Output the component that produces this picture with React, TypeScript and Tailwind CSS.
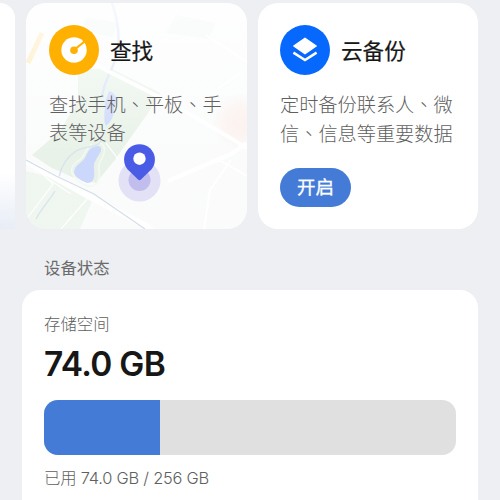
import React from 'react';

const storage = { used: 74, total: 256 };

// The enumeration comma sits in the middle of its box
const Comma = () => (
  <span className="font-['Noto_Sans_CJK_TC',sans-serif]">、</span>
);

function MapBackground() {
  return (
    <svg className="absolute inset-0 h-full w-full" viewBox="0 0 221 226" fill="none">
      <defs>
        <linearGradient id="fade" x1="0" y1="0" x2="0" y2="1">
          <stop offset="0" stopColor="#fff" stopOpacity="0.8" />
          <stop offset="0.3" stopColor="#fff" stopOpacity="0.5" />
          <stop offset="0.65" stopColor="#fff" stopOpacity="0.1" />
        </linearGradient>
        <radialGradient id="warm">
          <stop offset="0" stopColor="#fbefeb" />
          <stop offset="0.5" stopColor="#fbefeb" stopOpacity="0.8" />
          <stop offset="1" stopColor="#fbefeb" stopOpacity="0" />
        </radialGradient>
      </defs>
      <rect width="221" height="226" fill="#fafbfb" />
      <circle cx="214" cy="118" r="28" fill="url(#warm)" />
      {/* parks */}
      <path d="M52 66L86 66L134 90L122 110L88 158L70 180L46 174L26 165L6 152L34 128L52 98Z" fill="#e6f1e6" />
      <path d="M0 168L32 176L66 198L54 226H0Z" fill="#eef5ee" />
      <path d="M150 12L190 20L183 36L140 30Z" fill="#eff6f2" />
      <path d="M60 14L92 20L86 34L56 28Z" fill="#eff6f2" />
      <path d="M16 30L2 60" stroke="#fbe5a8" strokeWidth="5" />
      {/* water */}
      <path d="M86 0C93 20 94 35 91 50C88 66 78 76 76 94" stroke="#d3ddf3" strokeWidth="2.5" />
      <path d="M83 88C91 90 92 97 88 105C88 112 86 118 80 123C77 118 79 106 79 99Z" fill="#c6d4fb" />
      <path d="M68 144C72 142 76 143 75 148C71 156 67 159 68 166C69 174 68 180 61 180C55 178 48 173 48 169C49 161 57 160 60 153C62 148 64 145 68 144Z" fill="#c6d4fb" />
      <path d="M66 141C60 146 59 149 56 155C49 160 44 164 46 170C52 180 64 188 71 180C76 174 71 166 74 159C79 151 81 143 74 140" stroke="#f3f8f2" strokeWidth="1.5" />
      <path d="M76 135C74 146 60 142 50 148C41 154 35 164 33 174M29 188C23 198 15 206 10 216" stroke="#d3e0ec" strokeWidth="1.3" />
      {/* roads */}
      <g stroke="#fff">
        <path d="M66 60L147 101L221 145" strokeWidth="4" />
        <path d="M0 158L64 194L126 226" strokeWidth="6" />
        <path d="M142 178L205 151L221 140" strokeWidth="4.5" />
        <path d="M180 32L221 59M192 86L214 70M205 157L184 187L178 226M193 157L221 173" strokeWidth="2" />
        <path d="M8 163L27 181L2 214M21 175L45 191M35 226L61 196M80 140L92 156" strokeWidth="1.2" />
      </g>
      <path d="M0 157L30 173L68 191L119 226" stroke="#d0dbe4" strokeWidth="1.2" />
      <rect width="221" height="226" fill="url(#fade)" />
    </svg>
  );
}

function LocationPin() {
  return (
    <svg className="absolute left-[92px] top-[141px]" width="43" height="60" viewBox="0 0 43 60">
      <circle cx="21.5" cy="36.5" r="21" fill="#7066e0" fillOpacity="0.17" />
      <circle cx="21.5" cy="36" r="11" fill="#6259d5" fillOpacity="0.26" />
      <path d="M20 35.6L9.5 25.2A15.4 15.4 0 1 1 33.5 25.2L23 35.6Q21.5 37 20 35.6Z" fill="#4a5be6" />
      <circle cx="21.5" cy="14.7" r="6.2" fill="#fff" />
    </svg>
  );
}

function FindIcon() {
  return (
    <svg width="50" height="50" viewBox="0 0 50 50">
      <circle cx="25" cy="25" r="25" fill="#ffb000" />
      <circle cx="25" cy="25" r="12.7" fill="#fff" />
      <path d="M25 25L38 14.5" stroke="#ffb000" strokeWidth="2.2" />
      <circle cx="25" cy="25.3" r="3.8" fill="#ffb000" />
    </svg>
  );
}

function BackupIcon() {
  return (
    <svg width="50" height="50" viewBox="0 0 50 50">
      <circle cx="25" cy="25" r="25" fill="#0768fd" />
      <path d="M25 13.3L36.2 21L25 28.7L13.8 21Z" fill="#fff" stroke="#fff" strokeWidth="1.4" strokeLinejoin="round" />
      <path d="M13.4 27.6L25 35L36.6 27.6" fill="none" stroke="#fff" strokeWidth="2.5" />
    </svg>
  );
}

export default function App() {
  return (
    <div className="flex h-[500px] w-[500px] flex-col overflow-hidden bg-[#edeff2] pt-[3px] font-['Inter','Noto_Sans_CJK_SC',sans-serif] text-[#171717]">
      <div className="flex h-[226px] shrink-0 gap-[11px]">
        <div className="w-[15px] shrink-0 rounded-tr-[18px] bg-linear-to-b from-white from-75% to-[#e8edf6]" />

        <section className="relative w-[221px] shrink-0 overflow-hidden rounded-[20px]">
          <MapBackground />
          <LocationPin />
          <div className="relative px-[23px] pt-[22px]">
            <div className="flex items-center gap-[11px]">
              <FindIcon />
              <h2 className="pt-0.5 text-[21.6px] font-normal leading-[30px] [-webkit-text-stroke:0.2px]">查找</h2>
            </div>
            <p className="mt-4 whitespace-nowrap text-[19.2px] font-light leading-[27.5px] text-[#606060]">
              查找手机<Comma />平板<Comma />手
              <br />
              表等设备
            </p>
          </div>
        </section>

        <section className="w-[220px] shrink-0 rounded-[20px] bg-white px-[22px] pt-[22px]">
          <div className="flex items-center gap-[11px]">
            <BackupIcon />
            <h2 className="pt-0.5 text-[21.6px] font-normal leading-[30px] [-webkit-text-stroke:0.2px]">云备份</h2>
          </div>
          <p className="mt-4 whitespace-nowrap text-[19.2px] font-light leading-[27.5px] text-[#606060]">
            定时备份联系人<Comma />微
            <br />
            信<Comma />信息等重要数据
          </p>
          <button className="mt-5 flex h-[39px] w-[71px] items-center justify-center rounded-full bg-[#447bd6] text-[18.5px] font-normal text-white [-webkit-text-stroke:0.3px]">
            开启
          </button>
        </section>
      </div>

      <h3 className="mt-[27px] pl-11 text-[16.4px] leading-6 text-[#6b6b6b]">设备状态</h3>

      <section className="ml-[22px] mt-[10px] h-[240px] w-[456px] shrink-0 rounded-[18px] bg-white px-[22px] pt-[22px]">
        <p className="text-[16.4px] font-light leading-6 text-[#606060]">存储空间</p>
        <p className="mt-2 text-[33.5px] font-semibold leading-10 tracking-[-0.7px]">
          {storage.used.toFixed(1)} GB
        </p>
        <div className="mt-4 h-[55px] overflow-hidden rounded-[14px] bg-[#e0e0e0]">
          <div
            className="h-full bg-[#447bd6]"
            style={{ width: `${(storage.used / storage.total) * 97}%` }}
          />
        </div>
        <p className="mt-[11px] text-[16.4px] font-light leading-6 tracking-[-0.22px] text-[#606060]">
          已用 {storage.used.toFixed(1)} GB / {storage.total} GB
        </p>
      </section>
    </div>
  );
}
